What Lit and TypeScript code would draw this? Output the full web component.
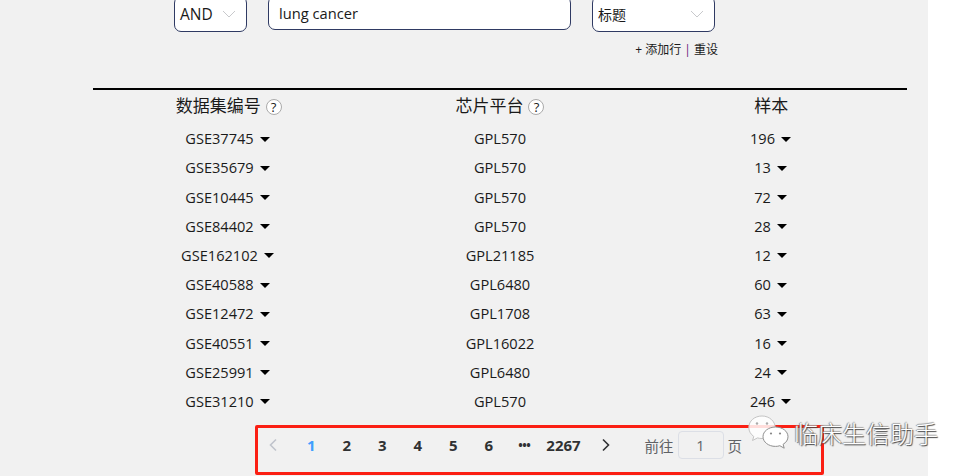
import { LitElement, html, css, svg } from "lit";
import { customElement } from "lit/decorators.js";

const rows = [
  ["GSE37745", "GPL570", "196"],
  ["GSE35679", "GPL570", "13"],
  ["GSE10445", "GPL570", "72"],
  ["GSE84402", "GPL570", "28"],
  ["GSE162102", "GPL21185", "12"],
  ["GSE40588", "GPL6480", "60"],
  ["GSE12472", "GPL1708", "63"],
  ["GSE40551", "GPL16022", "16"],
  ["GSE25991", "GPL6480", "24"],
  ["GSE31210", "GPL570", "246"],
];

const chevDown = svg`<svg class="chev" width="14" height="8" viewBox="0 0 14 8"><path d="M1 1l6 6 6-6" fill="none" stroke="#c8c9cc" stroke-width="1"/></svg>`;

@customElement("app-root")
export class AppRoot extends LitElement {
  static styles = css`
    :host {
      display: block;
      width: 969px;
      height: 476px;
      overflow: hidden;
      position: relative;
      background: #fff;
      font-family: "Open Sans", "Noto Sans CJK SC", sans-serif;
      color: #1a1a1a;
    }
    .page {
      width: 928px;
      height: 476px;
      background: #f1f1f1;
      box-sizing: border-box;
      padding-left: 93px;
      overflow: hidden;
    }
    .form {
      display: flex;
      align-items: flex-start;
      margin-top: -4px;
      margin-left: 81px;
      height: 36px;
    }
    .select {
      box-sizing: border-box;
      height: 36px;
      background: #fff;
      border: 1px solid #2f3a63;
      border-radius: 7px;
      display: flex;
      align-items: center;
      justify-content: space-between;
      font-size: 14px;
      padding: 0 10px 0 5px;
    }
    .s1 { width: 73px; font-size: 15.5px; }
    .s2 { width: 123px; margin-left: 21px; }
    .input {
      box-sizing: border-box;
      width: 303px;
      height: 34px;
      margin-left: 21px;
      background: #fff;
      border: 1px solid #2f3a63;
      border-radius: 7px;
      font-size: 14.7px;
      padding: 0 10px;
      display: flex;
      align-items: center;
    }
    .actions {
      width: 625px;
      margin-top: 10px;
      text-align: right;
      font-size: 12px;
      line-height: 16px;
      height: 16px;
    }
    .sep { color: #6a1b7a; }
    .table {
      width: 814px;
      margin-top: 30px;
      border-top: 2px solid #000;
    }
    .row {
      display: grid;
      grid-template-columns: 269px 276px 265px;
      height: 29.2px;
      align-items: center;
      justify-items: center;
      font-size: 14.6px;
    }
    .head {
      grid-template-columns: repeat(3, 1fr);
      height: 29px;
      font-size: 17px;
      margin-bottom: 4.6px;
    }
    .cell {
      display: flex;
      align-items: center;
      gap: 6px;
    }
    .head .cell { gap: 5px; }
    .caret {
      width: 0;
      height: 0;
      border-left: 5px solid transparent;
      border-right: 5px solid transparent;
      border-top: 5.5px solid #000;
      margin-top: 2px;
    }
    .help {
      box-sizing: border-box;
      width: 16px;
      height: 16px;
      border-radius: 50%;
      border: 1px solid #aaa;
      background: #fff;
      color: #222;
      font-size: 13px;
      line-height: 14px;
      text-align: center;
      margin-top: 5px;
    }
    .pager {
      display: flex;
      align-items: center;
      height: 36px;
      margin-top: 12px;
      margin-left: 162px;
      color: #303133;
      font-size: 15px;
      font-weight: 700;
    }
    .pg {
      min-width: 35.5px;
      text-align: center;
      flex: none;
    }
    .pg.on { color: #409eff; }
    .wide { min-width: 43px; }
    .dots { font-size: 12px; letter-spacing: -0.5px; }
    .nav { display: flex; justify-content: center; flex: none; }
    .prev { width: 38.5px; justify-content: flex-start; padding-left: 13px; box-sizing: border-box; }
    .next { width: 42.5px; }
    .jump {
      display: flex;
      align-items: center;
      margin-left: 17px;
      font-weight: 400;
      font-size: 14.5px;
      color: #606266;
    }
    .jump-input {
      box-sizing: border-box;
      width: 46px;
      height: 28px;
      margin: 0 4px;
      border: 1px solid #dcdfe6;
      border-radius: 4px;
      display: flex;
      align-items: center;
      justify-content: center;
    }
    .redbox {
      position: absolute;
      left: 255px;
      top: 425px;
      width: 569px;
      height: 50px;
      box-sizing: border-box;
      border: 3px solid #fb1f13;
      border-radius: 2px;
      pointer-events: none;
    }
    .mark {
      position: absolute;
      left: 748px;
      top: 415px;
      display: flex;
      align-items: center;
      gap: 5px;
    }
    .mark-text {
      font-size: 24px;
      line-height: 36px;
      font-weight: 300;
      font-family: "Noto Sans CJK SC", sans-serif;
      color: #fff;
      text-shadow: 1px 1px 1px #444, -1px 0 1px #888, 0 -1px 1px #aaa;
      white-space: nowrap;
    }
  `;

  render() {
    return html`
      <div class="page">
        <div class="form">
          <div class="select s1"><span>AND</span>${chevDown}</div>
          <div class="input">lung cancer</div>
          <div class="select s2"><span>标题</span>${chevDown}</div>
        </div>
        <div class="actions">+ 添加行 <span class="sep">|</span> 重设</div>
        <div class="table">
          <div class="row head">
            <div class="cell">数据集编号<span class="help">?</span></div>
            <div class="cell">芯片平台<span class="help">?</span></div>
            <div class="cell">样本</div>
          </div>
          ${rows.map(
            (r) => html`<div class="row">
              <div class="cell">${r[0]}<i class="caret"></i></div>
              <div class="cell">${r[1]}</div>
              <div class="cell">${r[2]}<i class="caret"></i></div>
            </div>`
          )}
        </div>
        <div class="pager">
          <span class="nav prev"><svg width="10" height="14" viewBox="0 0 10 14"><path d="M8 1.5L2.5 7 8 12.5" fill="none" stroke="#c0c4cc" stroke-width="1.6"/></svg></span>
          <span class="pg on">1</span>
          <span class="pg">2</span>
          <span class="pg">3</span>
          <span class="pg">4</span>
          <span class="pg">5</span>
          <span class="pg">6</span>
          <span class="pg dots">•••</span>
          <span class="pg wide">2267</span>
          <span class="nav next"><svg width="10" height="14" viewBox="0 0 10 14"><path d="M2 1.5L7.5 7 2 12.5" fill="none" stroke="#303133" stroke-width="1.6"/></svg></span>
          <div class="jump">前往<span class="jump-input">1</span>页</div>
        </div>
      </div>
      <div class="redbox"></div>
      <div class="mark">
        <svg width="41" height="36" viewBox="0 0 41 36">
          <path d="M14 1C6.5 1 .8 6 .8 12.5c0 3.6 1.8 6.7 5 9l-1.3 4 5-2.6c1.5.4 2.6.6 4.5.6 7.4 0 13.2-5 13.2-11S21.500 1 14 1z" fill="#fff" fill-opacity=".85" stroke="#c4c4c4" stroke-width="1"/>
          <path d="M27.500 12C20.600 12 15 16.300 15 21.700s5.600 9.700 12.500 9.700c1.600 0 3-.2 4.300-.7l4.400 2.500-1.100-3.900c3.100-1.800 4.900-4.500 4.900-7.600 0-5.400-5.600-9.700-12.500-9.700z" fill="#fff" stroke="#8f8f8f" stroke-width="1"/>
          <circle cx="9" cy="8.500" r="1.200" fill="#aaa"/><circle cx="19" cy="8.500" r="1.200" fill="#aaa"/>
          <circle cx="23" cy="18.500" r="1.100" fill="#888"/><circle cx="32" cy="18.500" r="1.100" fill="#888"/>
        </svg>
        <span class="mark-text">临床生信助手</span>
      </div>
    `;
  }
}
